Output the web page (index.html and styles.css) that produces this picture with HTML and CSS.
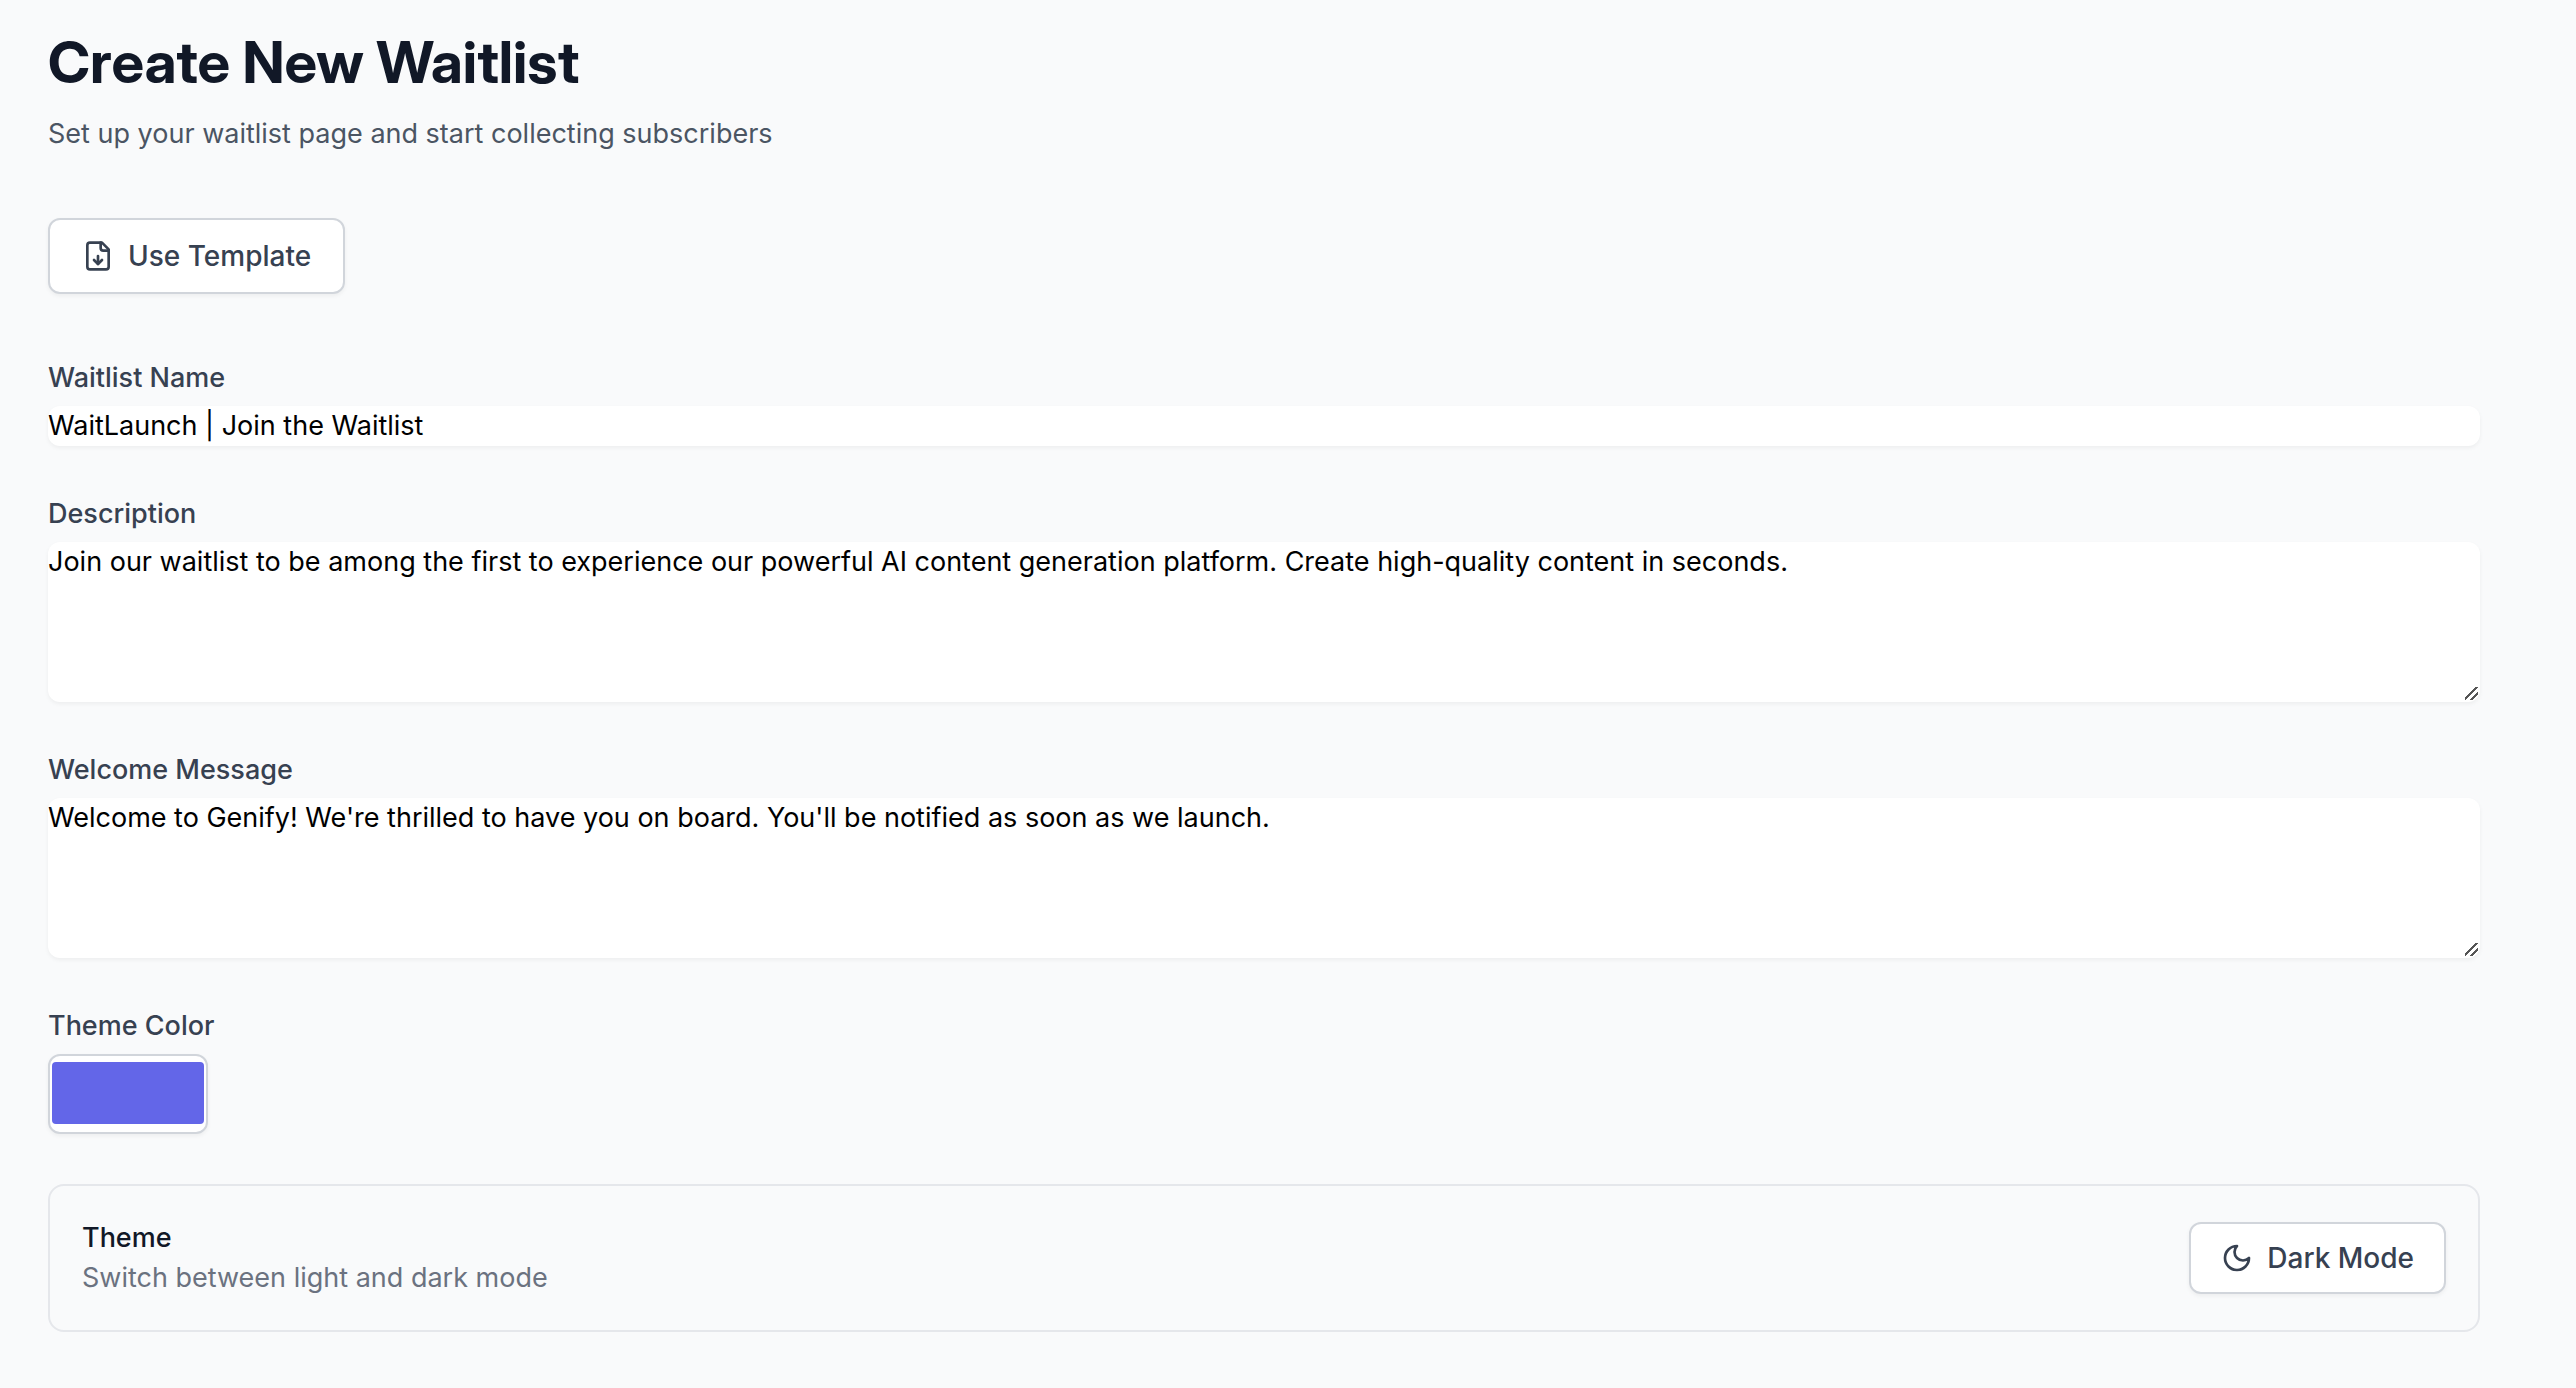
FILE: index.html
```html
<!DOCTYPE html>
<html lang="en">
<head>
  <meta charset="utf-8">
  <meta name="viewport" content="width=device-width, initial-scale=1">
  <title>Create New Waitlist</title>
  <link rel="stylesheet" href="styles.css">
</head>
<body>
  <main class="page">
    <header class="page-header">
      <h1 class="page-title">Create New Waitlist</h1>
      <p class="page-subtitle">Set up your waitlist page and start collecting subscribers</p>
    </header>

    <button type="button" class="button button-template">
      <svg class="icon" viewBox="0 0 24 24" aria-hidden="true">
        <path d="M15 2H6a2 2 0 0 0-2 2v16a2 2 0 0 0 2 2h12a2 2 0 0 0 2-2V7Z"/>
        <path d="M14 2v4a2 2 0 0 0 2 2h4"/>
        <path d="M12 18v-6"/>
        <path d="m9 15 3 3 3-3"/>
      </svg>
      Use Template
    </button>

    <form class="form">
      <div class="field">
        <label class="label" for="name">Waitlist Name</label>
        <input class="control" id="name" type="text" value="WaitLaunch | Join the Waitlist">
      </div>
      <div class="field">
        <label class="label" for="description">Description</label>
        <textarea class="control" id="description" rows="4">Join our waitlist to be among the first to experience our powerful AI content generation platform. Create high-quality content in seconds.</textarea>
      </div>
      <div class="field">
        <label class="label" for="welcome">Welcome Message</label>
        <textarea class="control" id="welcome" rows="4">Welcome to Genify! We're thrilled to have you on board. You'll be notified as soon as we launch.</textarea>
      </div>
      <div class="field">
        <label class="label" for="color">Theme Color</label>
        <input class="color-input" id="color" type="color" value="#6366e8">
      </div>
      <section class="theme-card">
        <div>
          <h2 class="theme-title">Theme</h2>
          <p class="theme-text">Switch between light and dark mode</p>
        </div>
        <button type="button" class="button button-mode">
          <svg class="icon" viewBox="0 0 24 24" aria-hidden="true">
            <path d="M12 3a6 6 0 0 0 9 9 9 9 0 1 1-9-9Z"/>
          </svg>
          Dark Mode
        </button>
      </section>
    </form>
  </main>
</body>
</html>
```
FILE: styles.css
```css
*,
*::before,
*::after {
  box-sizing: border-box;
}

body {
  margin: 0;
  background: #f9fafb;
  color: #111827;
  font: 400 27px/40px Inter, "Liberation Sans", sans-serif;
}

h1,
h2,
p {
  margin: 0;
}

.page {
  padding: 26px 96px 56px 48px;
}

.page-header {
  margin-bottom: 64px;
}

.page-title {
  font-family: "Inter Display", Inter, "Liberation Sans", sans-serif;
  font-size: 58px;
  font-weight: 700;
  line-height: 72px;
}

.page-subtitle {
  margin-top: 16px;
  color: #4b5563;
}

.button {
  display: inline-flex;
  align-items: center;
  gap: 14px;
  border: 2px solid #d1d5db;
  border-radius: 12px;
  background: #fff;
  box-shadow: 0 2px 4px rgb(0 0 0 / 5%);
  color: #374151;
  font: inherit;
  font-size: 28px;
  font-weight: 500;
  white-space: nowrap;
}

.button-template {
  padding: 16px 32px;
}

.button-mode {
  padding: 14px 30px;
}

.icon {
  width: 32px;
  height: 32px;
  flex: none;
  fill: none;
  stroke: currentColor;
  stroke-width: 2;
  stroke-linecap: round;
  stroke-linejoin: round;
}

.form {
  display: grid;
  gap: 48px;
  margin-top: 64px;
}

.field {
  display: grid;
  gap: 8px;
}

.label {
  color: #374151;
  font-weight: 500;
}

.control {
  display: block;
  width: 100%;
  margin: 0;
  padding: 0;
  border: 0;
  border-radius: 12px;
  background: #fff;
  box-shadow: 0 2px 4px rgb(0 0 0 / 5%);
  color: #000;
  font: inherit;
}

input.control {
  height: 40px;
}

textarea.control {
  resize: vertical;
}

textarea.control::-webkit-resizer {
  background: linear-gradient(135deg, transparent 40%, #555 40% 51%, transparent 51% 67%, #555 67% 78%, transparent 78%) 0 0 / 13px 13px no-repeat;
}

.color-input {
  width: 160px;
  height: 80px;
  padding: 0;
  border: 2px solid #d1d5db;
  border-radius: 12px;
  background: #fff;
  box-shadow: 0 2px 4px rgb(0 0 0 / 5%);
}

.color-input::-webkit-color-swatch-wrapper {
  padding: 6px 2px 8px;
}

.color-input::-webkit-color-swatch {
  border: 0;
  border-radius: 4px;
}

.theme-card {
  display: flex;
  align-items: center;
  justify-content: space-between;
  margin-top: 2px;
  padding: 32px;
  border: 2px solid #e5e7eb;
  border-radius: 16px;
}

.theme-title {
  font-size: 27px;
  font-weight: 500;
  line-height: 40px;
}

.theme-text {
  color: #6b7280;
}
```
